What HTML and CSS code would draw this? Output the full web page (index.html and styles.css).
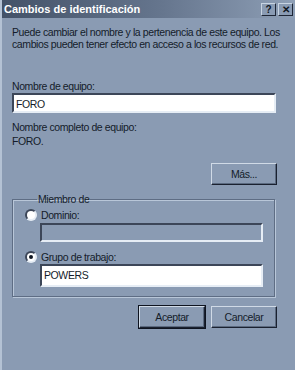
FILE: index.html
```html
<!DOCTYPE html>
<html lang="es">
<head>
    <meta charset="UTF-8">
    <title>Cambios de identificación</title>
    <link rel="stylesheet" href="styles.css">
</head>
<body>
    <div class="dialog">
        <div class="titlebar">
            <span class="title">Cambios de identificación</span>
            <div class="caption-buttons">
                <span class="cap-btn">?</span>
                <span class="cap-btn close">&#x2715;</span>
            </div>
        </div>

        <div class="content">
            <p class="intro">Puede cambiar el nombre y la pertenencia de este equipo. Los<br>cambios pueden tener efecto en acceso a los recursos de red.</p>

            <label class="field-label">Nombre de equipo:</label>
            <div class="textbox">FORO</div>

            <p class="full-label">Nombre completo de equipo:</p>
            <p class="full-name">FORO.</p>

            <div class="row-right more">
                <button class="btn">Más...</button>
            </div>

            <fieldset class="group">
                <legend>Miembro de</legend>
                <div class="radio-row first">
                    <span class="radio"></span>
                    <span>Dominio:</span>
                </div>
                <div class="textbox disabled"></div>
                <div class="radio-row">
                    <span class="radio checked"></span>
                    <span>Grupo de trabajo:</span>
                </div>
                <div class="textbox last">POWERS</div>
            </fieldset>

            <div class="row-right buttons">
                <button class="btn default">Aceptar</button>
                <button class="btn">Cancelar</button>
            </div>
        </div>
    </div>
</body>
</html>
```

FILE: styles.css
```css
body {
    margin: 0;
    background: #8a9bb3;
    font-family: "Liberation Sans", Arial, sans-serif;
    font-size: 10.5px;
    letter-spacing: -0.4px;
    color: #141c2a;
}
.dialog {
    width: 295px;
    height: 370px;
    box-sizing: border-box;
    border-left: 2px solid #b4c2d4;
    background: #8a9bb3;
}
.titlebar {
    height: 18px;
    display: flex;
    align-items: center;
    justify-content: space-between;
    padding: 0 2px 0 2px;
    background: linear-gradient(to right, #435268, #66768e 55%, #8e9fb6);
}
.title {
    color: #fff;
    font-weight: bold;
    font-size: 11px;
    letter-spacing: 0;
}
.caption-buttons { display: flex; gap: 2px; margin-top: 1px; }
.cap-btn {
    width: 15px;
    height: 13px;
    box-sizing: border-box;
    background: #8a9bb3;
    border: 1px solid;
    border-color: #c8d4e2 #1e2636 #1e2636 #c8d4e2;
    font-size: 10px;
    font-weight: bold;
    letter-spacing: 0;
    line-height: 11px;
    text-align: center;
    color: #101622;
}
.content { padding: 8px 19px 0 10px; }
p { margin: 0; }
.intro { line-height: 12px; margin-bottom: 30px; white-space: nowrap; }
.field-label { display: block; line-height: 13px; }
.textbox {
    height: 20px;
    box-sizing: border-box;
    background: #fff;
    border: 2px solid;
    border-color: #3c4658 #e6edf5 #e6edf5 #3c4658;
    padding: 2px 2px;
    line-height: 14px;
}
.textbox.disabled { background: #8a9bb3; height: 19px; }
.full-label { margin-top: 8px; line-height: 12px; }
.full-name { line-height: 12px; margin-top: 2px; }
.row-right { display: flex; justify-content: flex-end; gap: 6px; margin-right: -1px; }
.btn {
    width: 66px;
    height: 22px;
    box-sizing: border-box;
    font: inherit;
    letter-spacing: inherit;
    color: inherit;
    background: #8a9bb3;
    border: 1px solid;
    border-color: #d0dae6 #1a2130 #1a2130 #d0dae6;
    box-shadow: inset -1px -1px 0 #5b6a80;
    padding: 0;
}
.btn.default { outline: 1px solid #0e1420; }
.more { margin-top: 16px; }
.group {
    margin: 8px 1px 0 0;
    padding: 0 11px 9px 27px;
    border: 1px solid #5e6d84;
    box-shadow: 1px 1px 0 #b8c6d8, inset 1px 1px 0 #b8c6d8;
}
.group legend { padding: 0 1px; margin-left: -3px; line-height: 13px; }
.radio-row { display: flex; align-items: center; gap: 4px; margin-left: -15px; height: 14px; }
.radio-row.first { margin-top: 2px; margin-bottom: 1px; }
.radio {
    width: 12px;
    height: 12px;
    box-sizing: border-box;
    border-radius: 50%;
    background: #fff;
    border: 2px solid;
    border-color: #3c4658 #e6edf5 #e6edf5 #3c4658;
    display: flex;
    align-items: center;
    justify-content: center;
}
.radio.checked::after {
    content: "";
    width: 4px;
    height: 4px;
    border-radius: 50%;
    background: #101622;
}
.group .textbox { margin-bottom: 8px; }
.group .textbox.last { margin-bottom: 0; height: 23px; }
.buttons { margin-top: 9px; }
```
